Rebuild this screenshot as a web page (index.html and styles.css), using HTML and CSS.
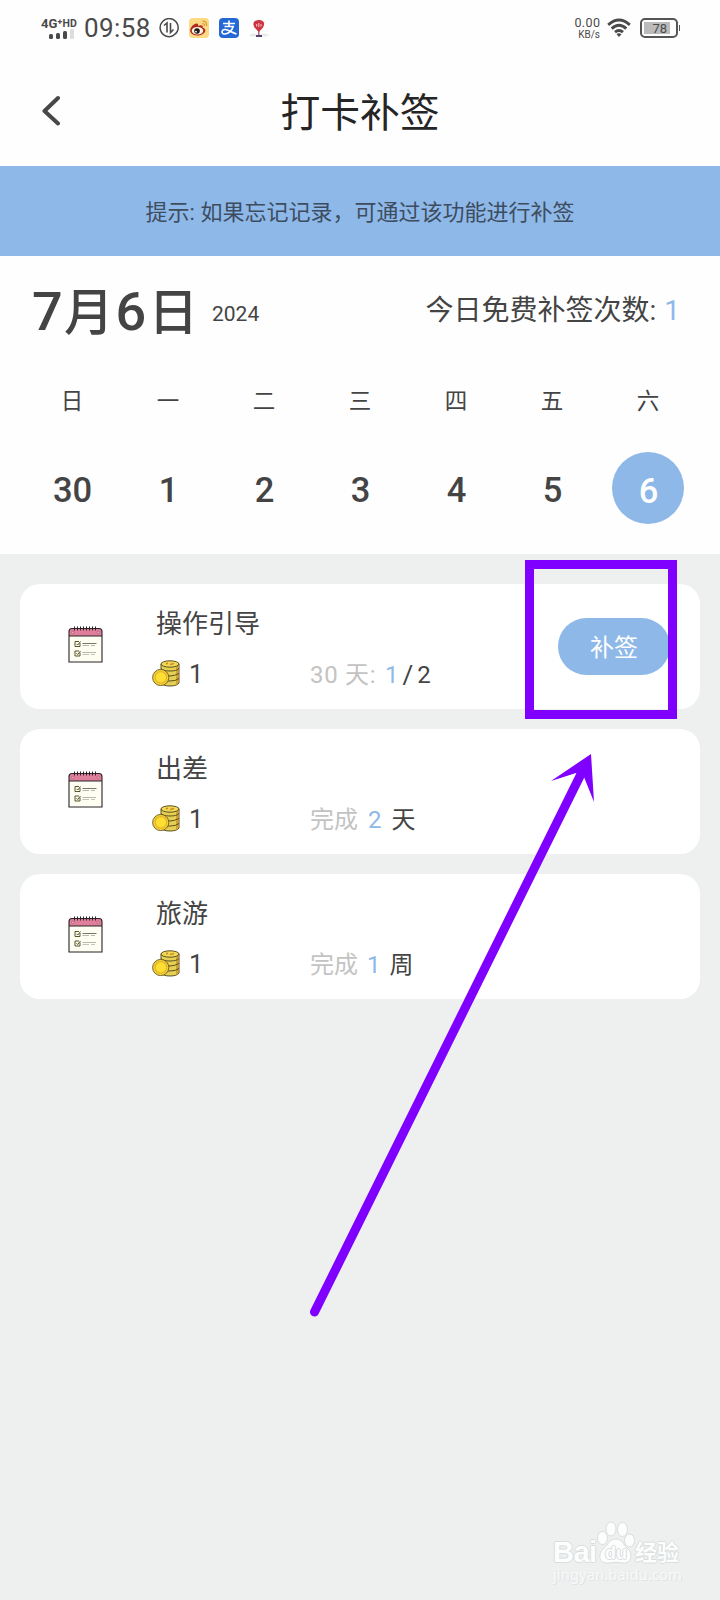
FILE: index.html
```html
<!DOCTYPE html>
<html lang="zh-CN">
<head>
<meta charset="utf-8">
<title>打卡补签</title>
<link rel="stylesheet" href="styles.css">
</head>
<body>
<svg class="defs" width="0" height="0">
  <symbol id="planner" viewBox="0 0 35 37">
    <path d="M1 10V5.500Q1 2.500 4 2.500H31Q34 2.500 34 5.500V10Z" fill="#e07f9b"/>
    <path d="M1 10H34V36H1Z" fill="#fffef2"/>
    <path d="M1 36V5.500Q1 2.500 4 2.500H31Q34 2.500 34 5.500V36ZM1 10H34" fill="none" stroke="#2b2226" stroke-width="1.100"/>
    <path d="M6.500 .5V4.500M9.500 .5V4.500M12.500 .5V4.500M15.500 .5V4.500M18.500 .5V4.500M21.500 .5V4.500M24.500 .5V4.500M27.500 .5V4.500" stroke="#2b2226" stroke-width="1"/>
    <circle cx="4.800" cy="6.300" r="1.100" fill="#fbd8df" stroke="#7c3448" stroke-width=".5"/>
    <circle cx="30.200" cy="6.300" r="1.100" fill="#fbd8df" stroke="#7c3448" stroke-width=".5"/>
    <path d="M11 15.500H7V20.500H12V17M8.500 17.800L9.700 19L12.500 15.500M11 25H7V30H12V26.500M8.500 27.300L9.700 28.500L12.500 25" fill="none" stroke="#55552a" stroke-width="1"/>
    <path d="M14.500 17.500H28.500" stroke="#77776f"/>
    <path d="M14.500 19.500H21M23 19.500H27" stroke="#a5a59d" stroke-width=".8"/>
    <path d="M14.500 26.500H28" stroke="#a5a59d" stroke-width=".8"/>
    <path d="M14.500 28.500H21M23 28.500H27" stroke="#b5b5ad" stroke-width=".8"/>
  </symbol>
  <symbol id="coins" viewBox="0 0 28 27">
    <path d="M9 4V23Q11 26 18 26T27 23V4Z" fill="#e6cf52" stroke="#5d511f"/>
    <path d="M24 6.500V25L26.500 23V5Z" fill="#cfa032"/>
    <ellipse cx="18" cy="4" rx="9" ry="3.200" fill="#f0d957" stroke="#5d511f"/>
    <path d="M14 4L16 3M18 4.500L22 3.500" stroke="#d08e22" stroke-width="1.500"/>
    <path d="M9 8.500Q11 11 18 11T27 8.500M11 15Q14 16 18 16T27 13.500M15 21H18Q24 21 27 18.500" fill="none" stroke="#5d511f" stroke-width="1"/>
    <circle cx="8.700" cy="17.500" r="8.100" fill="#f3d137" stroke="#6b5c22" stroke-width=".9"/>
    <circle cx="8.900" cy="17.300" r="5.700" fill="#ffe032" stroke="#e4b32b" stroke-width="1.200"/>
  </symbol>
</svg>

<div class="screen">
  <header class="status">
    <div class="network">
      <div class="network-type">4G⁺<span class="hd">HD</span></div>
      <div class="signal"><i class="s1"></i><i class="s2"></i><i class="s3"></i><i class="s4"></i></div>
    </div>
    <span class="clock">09:58</span>
    <svg class="ic-data" width="20" height="20" viewBox="0 0 20 20" fill="none" stroke="#4a4a4a">
      <path d="M15 17.200A9 9 0 1 1 18 14" stroke-width="1.500"/>
      <path d="M5 7.500L8 5V14.500M11.500 5V14.500L14.500 11.500" stroke-width="1.600"/>
      <path d="M13 18L19 12Q19 17 13 18Z" fill="#4a4a4a" stroke="none"/>
    </svg>
    <svg class="ic-weibo" width="20" height="20" viewBox="0 0 20 20">
      <rect width="20" height="20" rx="4" fill="#fbd985"/>
      <path d="M1.200 12.500C1 9 6.500 4 8.800 6C9.400 6.500 9 7.800 9 7.800C13 6.500 14.200 7.500 13.600 9.500C20 12 14 18 8 17.500C4 17.200 1.300 15.500 1.200 12.500Z" fill="#a92b21"/>
      <ellipse cx="8.500" cy="12.800" rx="5.700" ry="3.800" fill="#fff3e3"/>
      <circle cx="8" cy="13" r="2.800" fill="#1c1716"/><circle cx="7" cy="13.700" r=".9" fill="#fff"/>
      <path d="M13.500 3.200Q18.500 3 17.500 8M13.500 5.500Q16 5.500 15.400 8" fill="none" stroke="#dd9b35" stroke-width="1.200"/>
    </svg>
    <svg class="ic-pay" width="20" height="20" viewBox="0 0 20 20">
      <rect width="20" height="20" rx="4" fill="#2468d6"/>
      <path d="M4 5.500H16M10 2.500V8.500M5.500 8.500H14.200C13 13 8.500 16.500 5 16C1.500 15 3 11 6.500 11.500C10 12 13 14.500 17.500 16" fill="none" stroke="#fff" stroke-width="1.600"/>
    </svg>
    <svg class="ic-pin" width="20" height="20" viewBox="0 0 20 20">
      <path d="M0 17Q4 14 9 17Q15 14 20 17L17 18.500H2Z" fill="#e4ece7"/>
      <path d="M9.800 14L5.500 9.500C2.500 4.500 6 2 9.800 2S17 4.500 14 9.500Z" fill="#cf3540"/>
      <path d="M7.700 6V8.500M9.800 5V9M12 6V8.500" stroke="#f6c9cb" stroke-width="1"/>
      <path d="M9.800 12V17" stroke="#b4404e" stroke-width="1.200"/>
      <path d="M7 18H13" stroke="#53416e" stroke-width="2"/>
    </svg>
    <div class="speed"><div class="speed-num">0.00</div><div class="speed-unit">KB/s</div></div>
    <svg class="ic-wifi" width="24" height="20" viewBox="0 0 24 20" fill="none" stroke="#4a4a4a" stroke-width="2.900">
      <path d="M1.200 6.800Q12-2.800 22.800 6.800M4.700 10.600Q12 4 19.300 10.600M8 14.200Q12 10.800 16 14.200"/>
      <path d="M9.500 16.200Q12 14.500 14.500 16.200L12 19Z" fill="#4a4a4a" stroke="none"/>
    </svg>
    <div class="battery"><span class="level">78</span></div>
  </header>

  <nav class="titlebar">
    <svg class="back" width="20" height="32" viewBox="0 0 20 32"><path d="M18 3L4.500 16L18 28.500" fill="none" stroke="#484848" stroke-width="4" stroke-linecap="round" stroke-linejoin="round"/></svg>
    <h1 class="title">打卡补签</h1>
  </nav>

  <div class="tip">提示: 如果忘记记录，可通过该功能进行补签</div>

  <section class="calendar">
    <div class="summary">
      <div class="date"><span class="date-num">7</span><span class="month">月</span><span class="date-num">6</span><span class="day">日</span></div>
      <span class="year">2024</span>
      <div class="free">今日免费补签次数: <span class="blue">1</span></div>
    </div>
    <div class="week names"><span>日</span><span>一</span><span>二</span><span>三</span><span>四</span><span>五</span><span>六</span></div>
    <div class="week days"><span>30</span><span>1</span><span>2</span><span>3</span><span>4</span><span>5</span><span class="today">6</span></div>
  </section>

  <main class="list">
    <article class="card">
      <svg class="planner" width="35" height="37"><use href="#planner"/></svg>
      <h2 class="name">操作引导</h2>
      <div class="coins"><svg width="28" height="27"><use href="#coins"/></svg><span>1</span></div>
      <div class="detail"><span class="gray goal">30 天: </span><span class="blue">1</span><span class="slash">/</span><span>2</span></div>
      <button class="resign">补签</button>
    </article>
    <article class="card">
      <svg class="planner" width="35" height="37"><use href="#planner"/></svg>
      <h2 class="name">出差</h2>
      <div class="coins"><svg width="28" height="27"><use href="#coins"/></svg><span>1</span></div>
      <div class="detail"><span class="gray">完成</span><span class="blue count">2</span><span>天</span></div>
    </article>
    <article class="card">
      <svg class="planner" width="35" height="37"><use href="#planner"/></svg>
      <h2 class="name">旅游</h2>
      <div class="coins"><svg width="28" height="27"><use href="#coins"/></svg><span>1</span></div>
      <div class="detail"><span class="gray">完成</span><span class="blue count one">1</span><span>周</span></div>
    </article>
  </main>

  <svg class="marks" width="720" height="1600" viewBox="0 0 720 1600">
    <rect x="529.500" y="564.500" width="143" height="150" fill="none" stroke="#8000ff" stroke-width="9"/>
    <path d="M314.500 1312L581 774" stroke="#8000ff" stroke-width="9" stroke-linecap="round"/>
    <path d="M591 754L551 781L576 773L584 777L594 802Z" fill="#8000ff"/>
  </svg>

  <div class="watermark">
    <div class="brand">
      <span class="bai">Bai</span>
      <span class="paw">
        <svg width="40" height="44" viewBox="0 0 40 44" fill="#fcfdfd" stroke="#dadddd" stroke-width="1">
          <ellipse cx="6.500" cy="17" rx="5" ry="6.500"/><ellipse cx="15" cy="8" rx="5" ry="7"/><ellipse cx="26.500" cy="8.500" rx="5" ry="7"/><ellipse cx="33.500" cy="19.500" rx="5" ry="6.500"/>
          <path d="M20 18C26 18 27 23 31 27C38 33 35 43 27 42Q20 40.500 13 42C3 43 1 34 8 27C13 23 13 18 20 18Z"/>
        </svg>
        <span class="du">du</span>
      </span>
      <span class="jy">经验</span>
    </div>
    <div class="url">jingyan.baidu.com</div>
  </div>
</div>
</body>
</html>
```

FILE: styles.css
```css
* { box-sizing: border-box; }
body {
  margin: 0;
  background: #eef0f0;
  color: #444;
  font-family: Roboto, "Noto Sans CJK SC", sans-serif;
}
.defs { position: absolute; }
.screen {
  position: relative;
  width: 720px;
  height: 1600px;
  overflow: hidden;
  background: #eef0f0;
}

/* status bar */
.status {
  display: flex;
  align-items: center;
  height: 56px;
  padding: 0 42px 0 41px;
  background: #fefefe;
  color: #4a4a4a;
}
.network { width: 38px; font-weight: 700; }
.network-type { font-size: 13px; line-height: 11px; white-space: nowrap; }
.hd { font-size: 10.5px; vertical-align: 1px; }
.signal { display: flex; align-items: flex-end; gap: 3px; height: 10px; padding-left: 8px; }
.signal i { width: 4px; border-radius: 1.5px; background: #4a4a4a; }
.signal .s1 { height: 5px; }
.signal .s2 { height: 6px; }
.signal .s3 { height: 8px; }
.signal .s4 { height: 10px; background: #ddd; }
.clock { width: 67px; margin-left: 5px; font-size: 26px; line-height: 56px; letter-spacing: .4px; }
.ic-data { margin-left: 8px; }
.ic-weibo, .ic-pay, .ic-pin { margin-left: 10px; }
.speed { margin-left: auto; text-align: right; }
.speed-num { font-size: 12.5px; line-height: 13px; letter-spacing: .4px; margin-right: -.4px; }
.speed-unit { font-size: 10px; line-height: 11px; }
.ic-wifi { margin-left: 7px; }
.battery {
  position: relative;
  width: 38px;
  height: 20px;
  margin-left: 9px;
  padding: 2px;
  border: 2px solid #555;
  border-radius: 5px;
}
.battery::after {
  content: "";
  position: absolute;
  right: -4px;
  top: 5px;
  width: 1px;
  height: 6px;
  background: #555;
}
.level {
  display: block;
  width: 26px;
  height: 12px;
  background: #bbb;
  font-size: 13px;
  line-height: 13px;
  text-align: right;
  padding-right: 3px;
}

/* title */
.titlebar {
  display: grid;
  grid-template-columns: 40px 1fr 40px;
  align-items: center;
  height: 110px;
  padding: 0 40px;
  background: #fefefe;
}
.title {
  margin: 0;
  padding-top: 5px;
  color: #252525;
  font-size: 39.8px;
  font-weight: 400;
  line-height: 60px;
  text-align: center;
}
.tip {
  height: 90px;
  background: #8db8e8;
  color: #3e4c60;
  font-size: 22px;
  line-height: 94px;
  text-align: center;
}

/* calendar */
.calendar { height: 298px; background: #fefefe; }
.summary {
  display: flex;
  align-items: center;
  height: 108px;
  padding: 0 40px 0 32px;
}
.date { display: flex; align-items: baseline; padding-top: 4px; line-height: 70px; font-weight: 500; }
.date-num { width: 32px; font-size: 54px; }
.month, .day { font-size: 49.5px; }
.month { margin-right: 2px; }
.day { margin-left: 1px; }
.year { margin: 8px 0 0 14px; font-size: 21px; }
.free { margin-left: auto; padding-top: 2px; font-size: 28px; line-height: 40px; }
.free .blue { margin-left: 1px; }
.blue { color: #8db8e8; }
.week {
  display: grid;
  grid-template-columns: repeat(7, 96px);
  justify-content: center;
  justify-items: center;
  align-items: center;
}
.names { height: 74px; padding-bottom: 4px; font-size: 22.5px; }
.days { height: 100px; font-size: 34.5px; font-weight: 500; line-height: 76px; }
.days span { padding: 4px 0 0 1px; }
.days .today {
  width: 72px;
  height: 72px;
  padding: 2px 0 0 1px;
  border-radius: 50%;
  background: #8db8e8;
  color: #fff;
  line-height: 74px;
  text-align: center;
}

/* tasks */
.list { display: flex; flex-direction: column; gap: 20px; padding: 30px 20px; }
.card {
  display: grid;
  grid-template: 52px 48px / 83px 155px 1fr 112px;
  align-items: center;
  height: 125px;
  padding: 12px 30px 13px 48px;
  border-radius: 20px;
  background: #fff;
}
.planner { grid-row: 1 / 3; margin-bottom: 4px; }
.name { margin: 3px 0 0 5px; font-size: 26px; font-weight: 400; line-height: 40px; white-space: nowrap; }
.coins { grid-area: 2 / 2; display: flex; align-items: center; gap: 9px; padding: 2px 0 0 1px; font-size: 25.5px; }
.coins span { padding-top: 2px; }
.detail { grid-area: 2 / 3; display: flex; align-items: center; padding: 6px 0 0 4px; font-size: 24px; white-space: pre; line-height: 36px; }
.gray { color: #c3c3c3; }
.goal { letter-spacing: .7px; margin-right: 2px; }
.slash { margin: 0 4px; font-size: 26px; }
.count { margin: 0 10px; }
.one { margin: 0 9px; }
.resign {
  grid-area: 1 / 4 / 3 / 5;
  height: 57px;
  padding: 1px 0 0;
  border: 0;
  border-radius: 29px;
  background: #8db8e8;
  color: #fff;
  font: 24px/59px Roboto, "Noto Sans CJK SC", sans-serif;
}

/* annotations */
.marks { position: absolute; left: 0; top: 0; }
.watermark {
  position: absolute;
  left: 553px;
  top: 1521px;
  width: 130px;
  color: #fcfdfd;
  text-shadow: 1px 0 #dadddd, -1px 0 #dadddd, 0 1px #dadddd, 0 -1px #dadddd;
}
.brand { display: flex; height: 44px; align-items: flex-end; }
.bai { width: 43px; font: 700 29px/26px "Liberation Sans", sans-serif; letter-spacing: -.5px; }
.paw { position: relative; width: 39px; height: 44px; }
.du { position: absolute; left: 9px; top: 22px; color: #fcfdfd; font: 700 18px/20px "Liberation Sans", sans-serif; }
.jy { font-size: 22px; font-weight: 700; line-height: 24px; }
.url { margin-top: -1px; color: #f8f9f9; text-shadow: 1px 1px #e0e3e3; font: 14.9px/20px "Noto Sans", sans-serif; }
```
